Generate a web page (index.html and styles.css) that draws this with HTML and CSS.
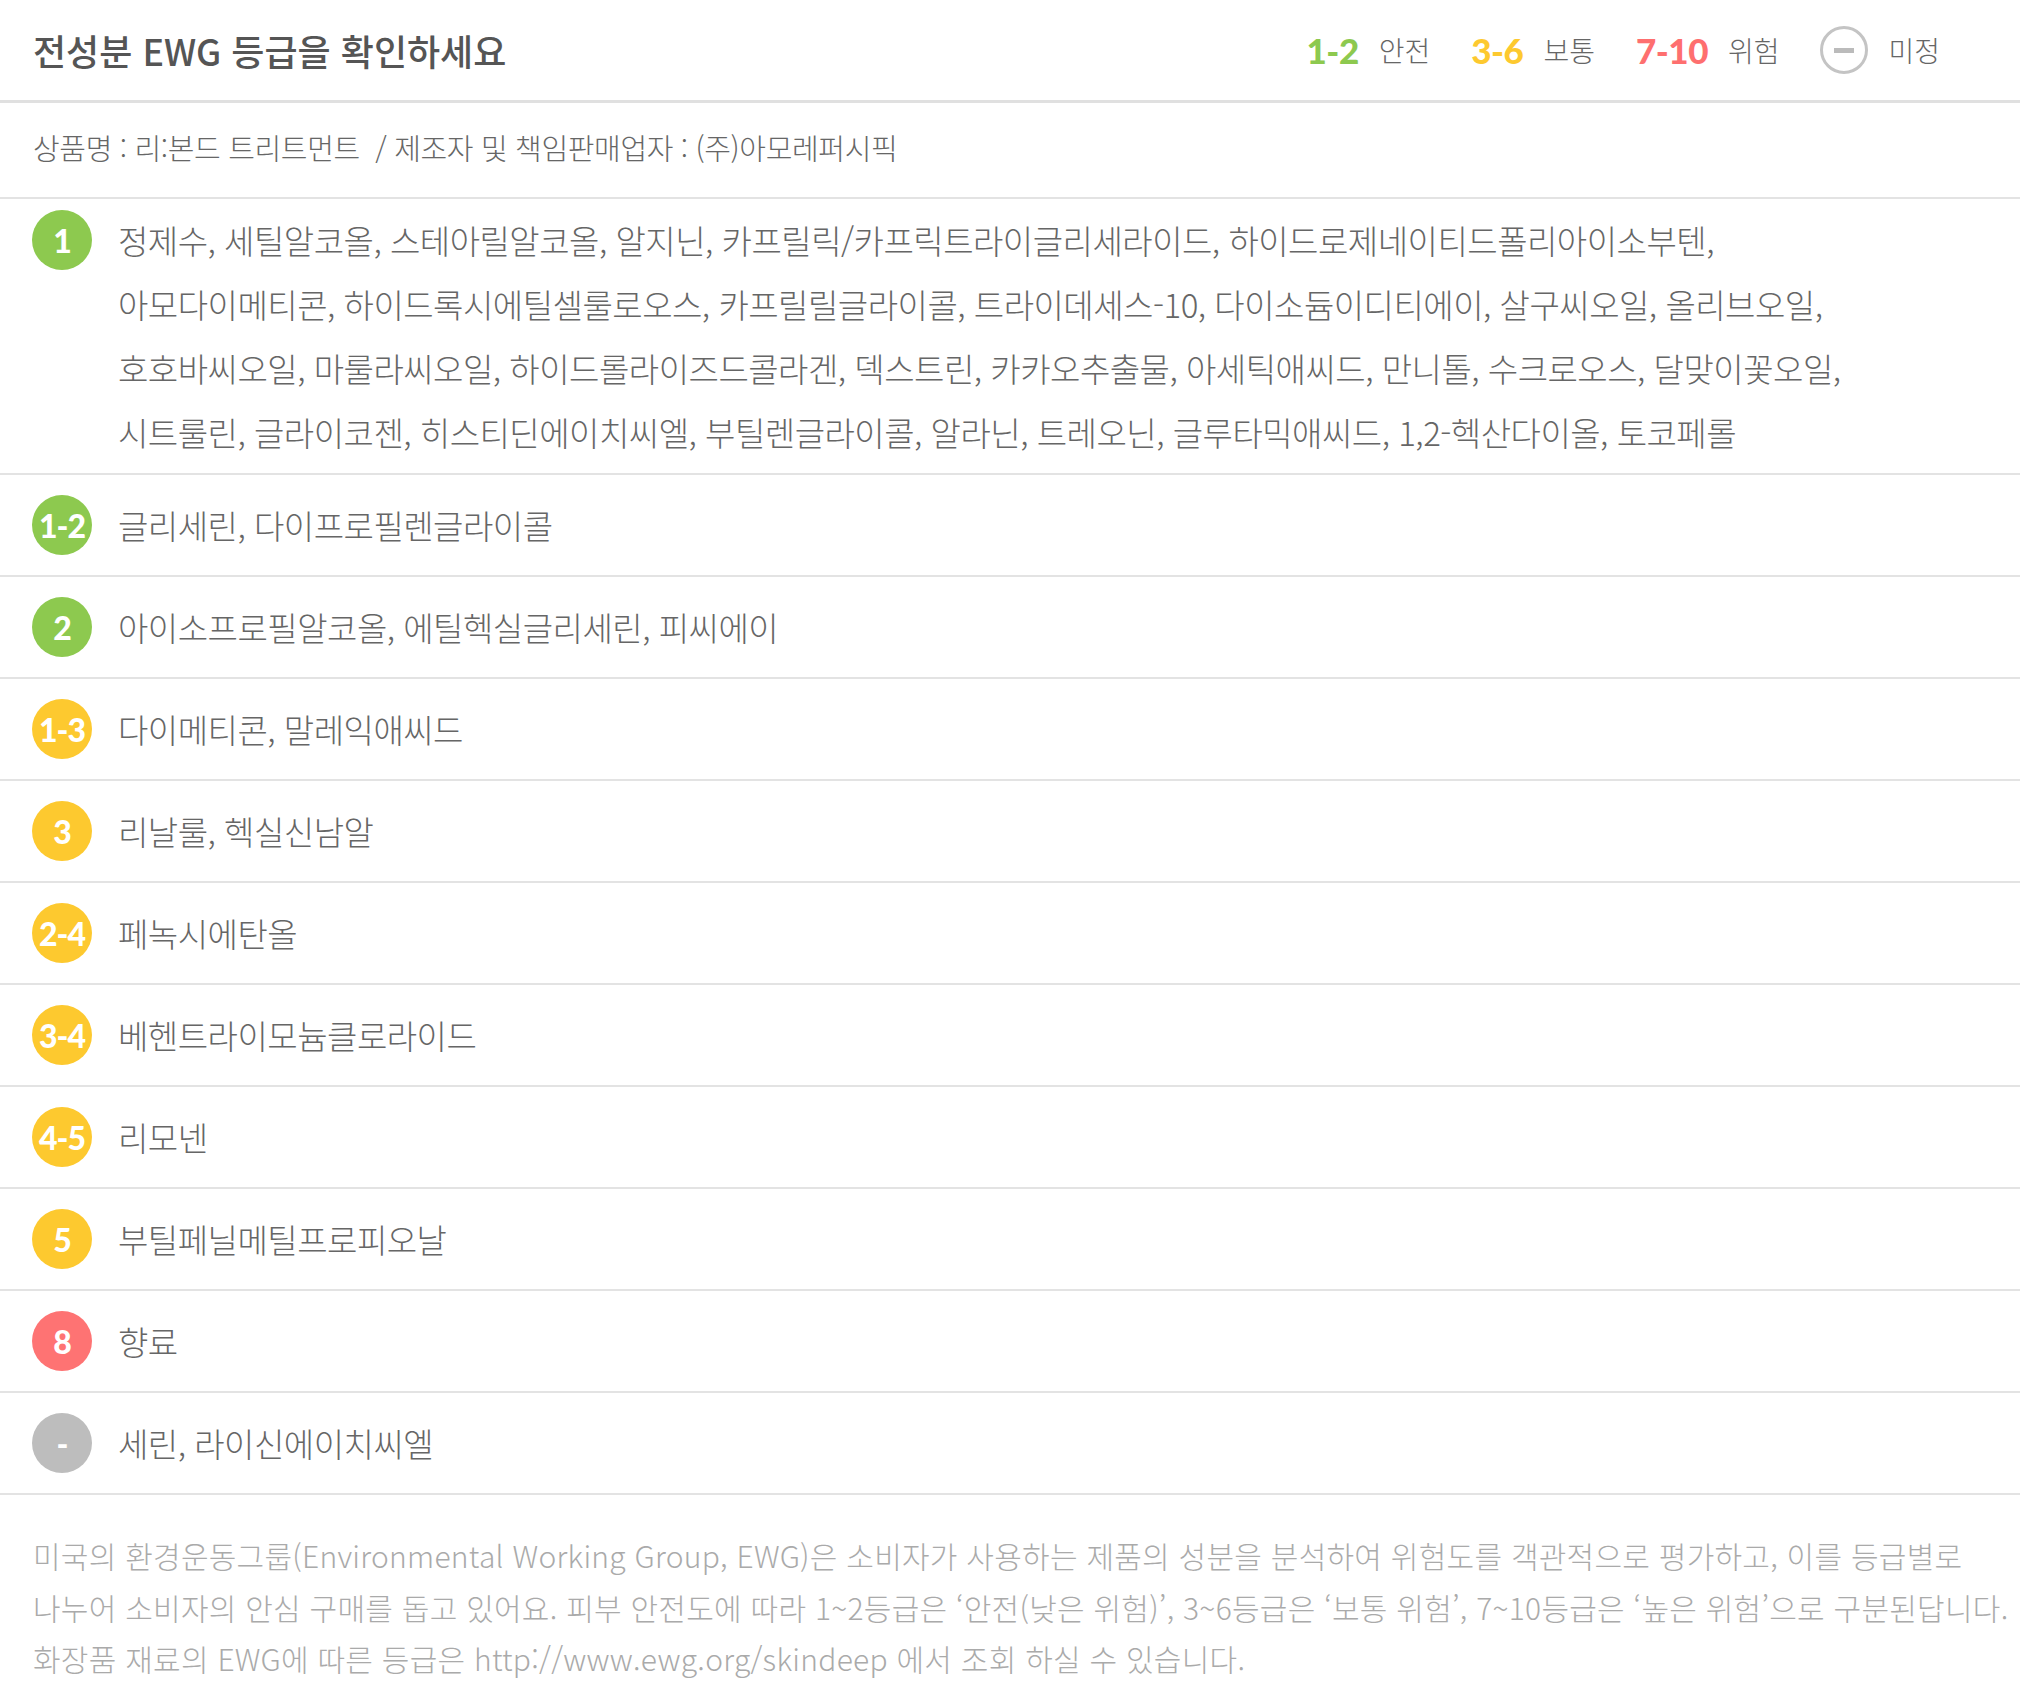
FILE: index.html
```
<!doctype html>
<html lang="ko">
	<head>
		<meta charset="utf-8">
		<title>전성분 EWG 등급</title>
		<link rel="stylesheet" href="styles.css">
	</head>
	<body>
<div class="ewg">
	<div class="ewg-head">
		<h2 class="ewg-title">전성분 EWG 등급을 확인하세요</h2>
		<ul class="legend">
			<li><b class="num green">1-2</b> 안전</li>
			<li><b class="num yellow">3-6</b> 보통</li>
			<li><b class="num red">7-10</b> 위험</li>
			<li><span class="none-icon"></span> 미정</li>
		</ul>
	</div>

	<p class="product">상품명 : 리:본드 트리트먼트 &nbsp;/ 제조자 및 책임판매업자 : (주)아모레퍼시픽</p>

	<ul class="grades">
		<li class="grade multi">
			<span class="badge green">1</span>
			<p>정제수, 세틸알코올, 스테아릴알코올, 알지닌, 카프릴릭/카프릭트라이글리세라이드, 하이드로제네이티드폴리아이소부텐,<br>
			아모다이메티콘, 하이드록시에틸셀룰로오스, 카프릴릴글라이콜, 트라이데세스-10, 다이소듐이디티에이, 살구씨오일, 올리브오일,<br>
			호호바씨오일, 마룰라씨오일, 하이드롤라이즈드콜라겐, 덱스트린, 카카오추출물, 아세틱애씨드, 만니톨, 수크로오스, 달맞이꽃오일,<br>
			시트룰린, 글라이코젠, 히스티딘에이치씨엘, 부틸렌글라이콜, 알라닌, 트레오닌, 글루타믹애씨드, 1,2-헥산다이올, 토코페롤</p>
		</li>
		<li class="grade">
			<span class="badge green">1-2</span>
			<p>글리세린, 다이프로필렌글라이콜</p>
		</li>
		<li class="grade">
			<span class="badge green">2</span>
			<p>아이소프로필알코올, 에틸헥실글리세린, 피씨에이</p>
		</li>
		<li class="grade">
			<span class="badge yellow">1-3</span>
			<p>다이메티콘, 말레익애씨드</p>
		</li>
		<li class="grade">
			<span class="badge yellow">3</span>
			<p>리날룰, 헥실신남알</p>
		</li>
		<li class="grade">
			<span class="badge yellow">2-4</span>
			<p>페녹시에탄올</p>
		</li>
		<li class="grade">
			<span class="badge yellow">3-4</span>
			<p>베헨트라이모늄클로라이드</p>
		</li>
		<li class="grade">
			<span class="badge yellow">4-5</span>
			<p>리모넨</p>
		</li>
		<li class="grade">
			<span class="badge yellow">5</span>
			<p>부틸페닐메틸프로피오날</p>
		</li>
		<li class="grade">
			<span class="badge red">8</span>
			<p>향료</p>
		</li>
		<li class="grade">
			<span class="badge gray">-</span>
			<p>세린, 라이신에이치씨엘</p>
		</li>
	</ul>

	<p class="note">미국의 환경운동그룹(Environmental Working Group, EWG)은 소비자가 사용하는 제품의 성분을 분석하여 위험도를 객관적으로 평가하고, 이를 등급별로<br>
	나누어 소비자의 안심 구매를 돕고 있어요. 피부 안전도에 따라 1~2등급은 ‘안전(낮은 위험)’, 3~6등급은 ‘보통 위험’, 7~10등급은 ‘높은 위험’으로 구분된답니다.<br>
	화장품 재료의 EWG에 따른 등급은 http://www.ewg.org/skindeep 에서 조회 하실 수 있습니다.</p>
</div>
	</body>
</html>
```

FILE: styles.css
```
body {
	margin: 0;
	background: #fff;
	font-family: "Noto Sans CJK KR", "Noto Sans", sans-serif;
	font-weight: 300;
	color: #666;
}

ul {
	list-style: none;
	margin: 0;
	padding: 0;
}

/* header */
.ewg-head {
	display: flex;
	align-items: center;
	justify-content: space-between;
	height: 100px;
	padding: 0 80px 0 33px;
	border-bottom: 3px solid #e0e0e0;
}

.ewg-title {
	margin: 0;
	font-size: 36px;
	font-weight: 500;
	color: #555;
	letter-spacing: 0;
}

.legend {
	display: flex;
	align-items: center;
	gap: 41px;
	font-size: 28px;
	color: #666;
}

.legend li {
	display: flex;
	align-items: center;
	gap: 20px;
}

.num {
	font-family: Lato, "Noto Sans", sans-serif;
	font-size: 35px;
	font-weight: 900;
	letter-spacing: -0.5px;
}

.num.green { color: #8dc94f; }
.num.yellow { color: #fdc92f; }
.num.red { color: #fe6f6f; }

.none-icon {
	display: flex;
	align-items: center;
	justify-content: center;
	width: 42px;
	height: 42px;
	border: 3px solid #c4c4c4;
	border-radius: 50%;
}

.none-icon::before {
	content: "";
	width: 20px;
	height: 5px;
	background: #bbb;
}

/* product */
.product {
	margin: 0;
	height: 94px;
	line-height: 88px;
	padding-left: 33px;
	font-size: 29px;
	letter-spacing: -0.35px;
	border-bottom: 2px solid #e3e3e3;
}

/* ingredient rows */
.grade {
	display: flex;
	align-items: flex-start;
	gap: 26px;
	padding: 18px 0 18px 32px;
	border-bottom: 2px solid #e3e3e3;
}

.grade.multi {
	padding: 9px 0;
	padding-left: 32px;
}

.grade p {
	margin: 0;
	font-size: 33px;
	line-height: 64px;
	letter-spacing: -0.5px;
	color: #666;
}

.badge {
	flex: none;
	display: flex;
	align-items: center;
	justify-content: center;
	width: 60px;
	height: 60px;
	margin-top: 2px;
	border-radius: 50%;
	font-family: Lato, "Noto Sans", sans-serif;
	font-size: 32px;
	font-weight: 900;
	letter-spacing: -1px;
	color: #fff;
	white-space: nowrap;
}

.badge.green { background: #8dc94f; }
.badge.yellow { background: #fdc92f; }
.badge.red { background: #fe7373; }
.badge.gray { background: #bdbdbd; }

/* note */
.note {
	margin: 0;
	padding: 35px 0 0 33px;
	font-size: 30px;
	line-height: 51.5px;
	letter-spacing: 0.25px;
	color: #aaa;
	white-space: nowrap;
}
```
